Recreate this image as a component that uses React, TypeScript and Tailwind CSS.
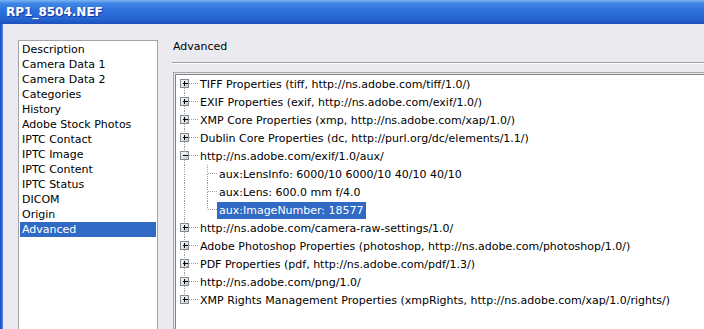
import { useId } from "react";

const categories = [
  "Description",
  "Camera Data 1",
  "Camera Data 2",
  "Categories",
  "History",
  "Adobe Stock Photos",
  "IPTC Contact",
  "IPTC Image",
  "IPTC Content",
  "IPTC Status",
  "DICOM",
  "Origin",
  "Advanced",
];

type Node = {
  label: string;
  open?: boolean;
  children?: string[];
};

const tree: Node[] = [
  { label: "TIFF Properties (tiff, http://ns.adobe.com/tiff/1.0/)" },
  { label: "EXIF Properties (exif, http://ns.adobe.com/exif/1.0/)" },
  { label: "XMP Core Properties (xmp, http://ns.adobe.com/xap/1.0/)" },
  { label: "Dublin Core Properties (dc, http://purl.org/dc/elements/1.1/)" },
  {
    label: "http://ns.adobe.com/exif/1.0/aux/",
    open: true,
    children: [
      "aux:LensInfo: 6000/10 6000/10 40/10 40/10",
      "aux:Lens: 600.0 mm f/4.0",
      "aux:ImageNumber: 18577",
    ],
  },
  { label: "http://ns.adobe.com/camera-raw-settings/1.0/" },
  { label: "Adobe Photoshop Properties (photoshop, http://ns.adobe.com/photoshop/1.0/)" },
  { label: "PDF Properties (pdf, http://ns.adobe.com/pdf/1.3/)" },
  { label: "http://ns.adobe.com/png/1.0/" },
  { label: "XMP Rights Management Properties (xmpRights, http://ns.adobe.com/xap/1.0/rights/)" },
];

const LINE = "#a0a0a0";

// connector drawing for one tree row
const Gutter = ({
  width,
  cx,
  up,
  down,
  branch,
  expander,
}: {
  width: number;
  cx: number;
  up: boolean;
  down: boolean;
  branch: boolean;
  expander?: "+" | "-";
}) => {
  const id = useId();
  const x = cx + 0.5;
  return (
    <svg width={width} height={18} className="shrink-0 block">
      <defs>
        <linearGradient id={id} x1="0" y1="0" x2="1" y2="1">
          <stop offset="0" stopColor="#ffffff" />
          <stop offset="1" stopColor="#c9c6bd" />
        </linearGradient>
      </defs>
      {up && <line x1={x} y1={0} x2={x} y2={8.5} stroke={LINE} strokeDasharray="1 1" />}
      {down && <line x1={x} y1={9} x2={x} y2={18} stroke={LINE} strokeDasharray="1 1" />}
      {branch && (
        <line x1={cx + 1} y1={8.5} x2={width} y2={8.5} stroke={LINE} strokeDasharray="1 1" />
      )}
      {expander && (
        <g>
          <rect x={cx - 3.5} y={4.5} width={8} height={8} fill={`url(#${id})`} stroke="#7f8a95" />
          <line x1={cx - 1} y1={8.5} x2={cx + 4} y2={8.5} stroke="#000" />
          {expander === "+" && <line x1={x} y1={6} x2={x} y2={11} stroke="#000" />}
        </g>
      )}
    </svg>
  );
};

export default function App() {
  return (
    <div className="w-[704px] h-[329px] overflow-hidden flex flex-col text-[11px] text-black font-['DejaVu_Sans',sans-serif]">
      <div className="h-[24px] shrink-0 flex items-center pl-[6px] bg-[linear-gradient(to_bottom,#7db4f2_0%,#3f86e6_14%,#2b70db_45%,#2664d2_80%,#1c4fba_100%)]">
        <span className="text-white font-bold text-[12px] [text-shadow:1px_1px_0_#1a3a9c]">
          RP1_8504.NEF
        </span>
      </div>

      <div className="flex flex-1 min-h-0 bg-[#ebeaee]">
        <div className="w-[3px] shrink-0 bg-[linear-gradient(to_right,#1848c4,#2c63dc,#5b8ee8)]" />

        <div className="pl-[15px] pt-[16px] shrink-0">
          <div className="w-[140px] h-full border border-b-0 border-[#a3a3a8] bg-white px-px pt-px">
            {categories.map((c) => (
              <div
                key={c}
                className={`h-[15px] leading-[15px] px-[2px] whitespace-nowrap ${
                  c === "Advanced" ? "bg-[#316ac5] text-white" : ""
                }`}
              >
                {c}
              </div>
            ))}
          </div>
        </div>

        <div className="flex-1 min-w-0 flex flex-col pl-[14px] pt-[15px]">
          <div className="h-[15px] leading-[15px] pl-px">Advanced</div>
          <div className="mt-[8px] h-px bg-[#a0a0a4]" />
          <div className="h-px bg-white" />
          <div className="mt-[8px] ml-px flex-1 border border-r-0 border-b-0 border-[#a6a6aa] pl-px pt-px">
            <div className="h-full border border-r-0 border-b-0 border-[#838388] bg-white pt-0">
              {tree.map((n, i) => {
                const first = i === 0;
                const last = i === tree.length - 1;
                return (
                  <div key={n.label}>
                    <div className="flex h-[18px] items-center whitespace-nowrap">
                      <Gutter
                        width={22}
                        cx={8}
                        up={!first}
                        down={!last}
                        branch
                        expander={n.open ? "-" : "+"}
                      />
                      <span className="px-[2px] leading-[17px]">{n.label}</span>
                    </div>
                    {n.open &&
                      n.children?.map((c, j) => {
                        const lastChild = j === n.children!.length - 1;
                        return (
                          <div key={c} className="flex h-[18px] items-center whitespace-nowrap">
                            <Gutter width={22} cx={8} up down branch={false} />
                            <Gutter width={19} cx={9} up down={!lastChild} branch />
                            <span
                              className={`px-[2px] h-[17px] leading-[17px] ${
                                c === "aux:ImageNumber: 18577" ? "bg-[#316ac5] text-white" : ""
                              }`}
                            >
                              {c}
                            </span>
                          </div>
                        );
                      })}
                  </div>
                );
              })}
            </div>
          </div>
        </div>
      </div>
    </div>
  );
}
